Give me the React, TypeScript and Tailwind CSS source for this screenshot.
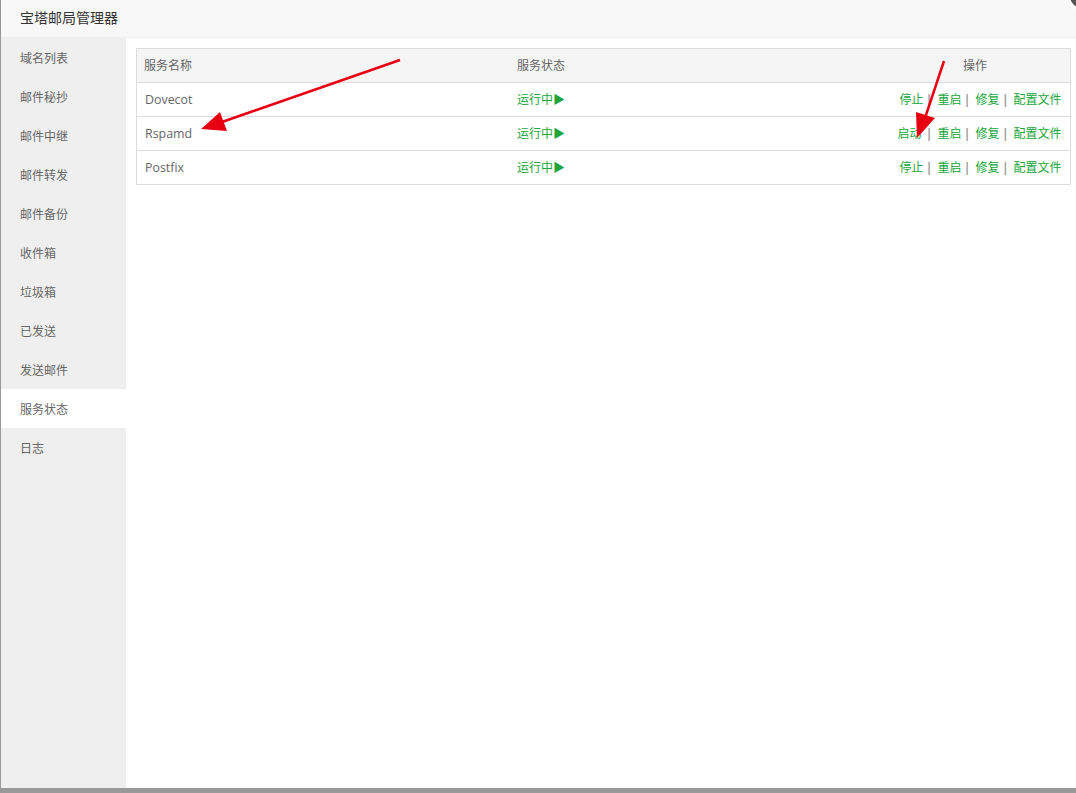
const font = { fontFamily: '"Open Sans", "Noto Sans CJK SC", sans-serif' };

const menu = ["域名列表", "邮件秘抄", "邮件中继", "邮件转发", "邮件备份", "收件箱", "垃圾箱", "已发送", "发送邮件", "服务状态", "日志"];
const rows = [
  { name: "Dovecot", first: "停止", extra: false },
  { name: "Rspamd", first: "启动", extra: true },
  { name: "Postfix", first: "停止", extra: false },
];

function Sep() {
  return <span className="ml-[2.4px] mr-[5px] font-bold text-[#999]">|</span>;
}

export default function App() {
  return (
    <div className="relative flex h-[793px] w-[1076px] overflow-hidden bg-[#999] text-[12px] text-[#666]" style={font}>
      <div className="ml-px flex h-[788px] flex-1 flex-col bg-white">
        <div className="flex h-[38px] shrink-0 items-center border-b border-[#eee] bg-[#f8f8f8] pb-[3px] pl-[19px] text-[14px] text-[#333]">宝塔邮局管理器</div>
        <div className="flex min-h-0 flex-1">
          <div className="w-[125px] shrink-0 bg-[#efefef]">
            {menu.map((m) => (
              <div key={m} className={`flex h-[39px] items-center pl-[19px] pt-[2px] text-[#666] ${m === "服务状态" ? "bg-white" : ""}`}>{m}</div>
            ))}
          </div>
          <div className="flex-1 pl-[10px] pr-[5px] pt-[10px]">
            <table className="w-full table-fixed border-collapse border border-[#ddd]">
              <thead>
                <tr className="h-[34px] bg-[#f5f5f5] text-[#666]">
                  <th className="w-[373px] pl-[7px] pt-px text-left font-normal">服务名称</th>
                  <th className="pl-[7.5px] pt-px text-left font-normal">服务状态</th>
                  <th className="w-[200px] pr-[83px] pt-px text-right font-normal">操作</th>
                </tr>
              </thead>
              <tbody>
                {rows.map((r) => (
                  <tr key={r.name} className="h-[34px] border-t border-[#ddd]">
                    <td className="pl-[8px] pt-[2px] text-[12.4px]">{r.name}</td>
                    <td className="pl-[7.5px] text-[#20a53a]">运行中▶</td>
                    <td className="whitespace-nowrap pr-[8.5px] text-right text-[#20a53a]">
                      <span className={r.extra ? "mr-[2px]" : ""}>{r.first}</span><Sep />重启<Sep />修复<Sep />配置文件
                    </td>
                  </tr>
                ))}
              </tbody>
            </table>
          </div>
        </div>
      </div>
      <div className="absolute right-[-20px] top-[-18px] h-[28px] w-[28px] rounded-full border-2 border-white bg-[#555]" />
      <svg className="absolute left-0 top-0" width="1076" height="793">
        <line x1="400" y1="60" x2="222" y2="122" stroke="#e60012" strokeWidth="2.5" />
        <polygon points="201,129 220,112 227,131" fill="#e60012" />
        <line x1="944" y1="61" x2="925" y2="118" stroke="#e60012" strokeWidth="2.5" />
        <polygon points="917,138 916,112 935,118" fill="#e60012" />
      </svg>
    </div>
  );
}
